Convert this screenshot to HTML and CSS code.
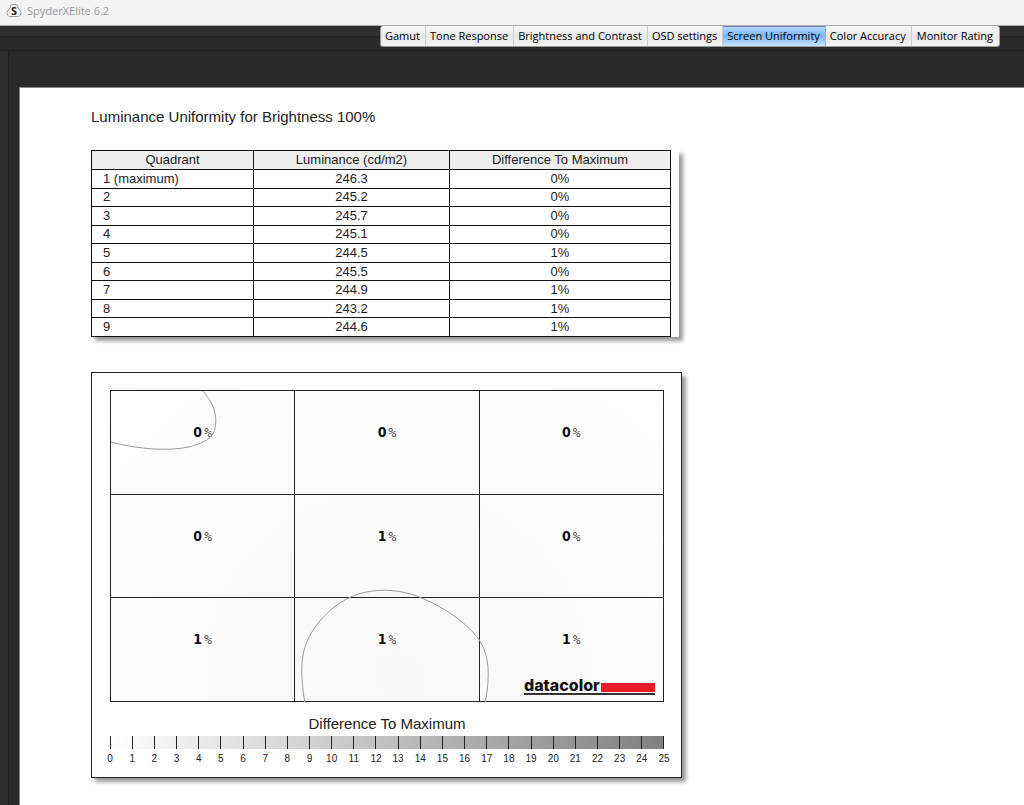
FILE: index.html
```html
<!DOCTYPE html>
<html lang="en">
<head>
  <meta charset="UTF-8">
  <meta name="viewport" content="width=device-width, initial-scale=1.0">
  <title>SpyderXElite 6.2</title>
  <link rel="stylesheet" href="styles.css">
</head>
<body>
  <header class="titlebar">
    <svg class="app-icon" width="16" height="16" viewBox="0 0 16 16" aria-hidden="true">
      <path d="M6 1.500h4q1 0 1.500 1.500l.5 2 2.500 3q1 1.200.4 2.500l-.9 2q-.5 1-1.500 1h-9q-1 0-1.500-1l-.9-2q-.6-1.300.4-2.500L4 5 4.500 3q.5-1.500 1.500-1.500z" fill="#fafafa" stroke="#999"/>
      <text x="8" y="12" text-anchor="middle">S</text>
    </svg>
    <span>SpyderXElite 6.2</span>
  </header>

  <div class="toolbar">
    <nav class="tabs">
      <button>Gamut</button>
      <button>Tone Response</button>
      <button>Brightness and Contrast</button>
      <button>OSD settings</button>
      <button class="active">Screen Uniformity</button>
      <button>Color Accuracy</button>
      <button>Monitor Rating</button>
    </nav>
  </div>

  <div class="workspace">
    <main class="report">
      <h1>Luminance Uniformity for Brightness 100%</h1>

      <div class="table-card">
        <table>
          <thead>
            <tr><th class="col-quadrant">Quadrant</th><th class="col-luminance">Luminance (cd/m2)</th><th>Difference To Maximum</th></tr>
          </thead>
          <tbody>
            <tr><td>1 (maximum)</td><td>246.3</td><td>0%</td></tr>
            <tr><td>2</td><td>245.2</td><td>0%</td></tr>
            <tr><td>3</td><td>245.7</td><td>0%</td></tr>
            <tr><td>4</td><td>245.1</td><td>0%</td></tr>
            <tr><td>5</td><td>244.5</td><td>1%</td></tr>
            <tr><td>6</td><td>245.5</td><td>0%</td></tr>
            <tr><td>7</td><td>244.9</td><td>1%</td></tr>
            <tr><td>8</td><td>243.2</td><td>1%</td></tr>
            <tr><td>9</td><td>244.6</td><td>1%</td></tr>
          </tbody>
        </table>
      </div>

      <section class="map-card">
        <div class="map">
          <div class="quadrant"><b>0</b>%</div>
          <div class="quadrant"><b>0</b>%</div>
          <div class="quadrant"><b>0</b>%</div>
          <div class="quadrant"><b>0</b>%</div>
          <div class="quadrant"><b>1</b>%</div>
          <div class="quadrant"><b>0</b>%</div>
          <div class="quadrant"><b>1</b>%</div>
          <div class="quadrant"><b>1</b>%</div>
          <div class="quadrant"><b>1</b>%</div>
          <svg class="contours" viewBox="0 0 554 311" preserveAspectRatio="none" aria-hidden="true">
            <path d="M92 0C101 10 105 20 105 30C105 42 100 48 90 52C70 61 35 60 0 51"/>
            <path d="M194 311C190 285 190 268 195 254C203 232 225 210 248 203C265 198 283 198 300 203C323 210 354 228 369 249C379 264 380 285 375 311"/>
          </svg>
          <div class="brand"><span class="brand-name">datacolor</span><span class="brand-bar"></span></div>
        </div>

        <h2>Difference To Maximum</h2>
        <ol class="scale">
          <li>0</li><li>1</li><li>2</li><li>3</li><li>4</li><li>5</li><li>6</li>
          <li>7</li><li>8</li><li>9</li><li>10</li><li>11</li><li>12</li><li>13</li>
          <li>14</li><li>15</li><li>16</li><li>17</li><li>18</li><li>19</li><li>20</li>
          <li>21</li><li>22</li><li>23</li><li>24</li><li>25</li>
        </ol>
      </section>
    </main>
  </div>
</body>
</html>
```
FILE: styles.css
```css
* {
  box-sizing: border-box;
}

body {
  margin: 0;
  min-height: 100vh;
  display: flex;
  flex-direction: column;
  background: #292929;
  color: #222;
  font-family: "Liberation Sans", Arial, sans-serif;
}

.titlebar {
  display: flex;
  align-items: center;
  gap: 5px;
  height: 26px;
  padding: 0 6px 4px;
  background: #f3f3f3;
  border-bottom: 1px solid #aaa;
  color: #999;
  font: 11px "Open Sans", "Noto Sans", sans-serif;
}

.app-icon text {
  font: bold 11px "Open Sans", sans-serif;
  fill: #222;
}

.toolbar {
  display: flex;
  justify-content: flex-end;
  height: 25px;
  padding-right: 24px;
  background: linear-gradient(#2f2f2f 10px, #242424 10px, #292929 13px);
  border-bottom: 1px solid #202020;
}

.tabs {
  display: flex;
  height: 21px;
  border: 1px solid #999;
  border-top: 0;
  border-radius: 3px;
  overflow: hidden;
  background: linear-gradient(#f8f8f8, #e8e8e8 50%, #f4f4f4);
}

.tabs button {
  padding: 0 5px 2px 4px;
  border: 0;
  border-right: 1px solid #ccc;
  background: none;
  color: #000;
  font: 11px "Open Sans", "Noto Sans", sans-serif;
  white-space: nowrap;
}

.tabs button:last-child {
  padding: 0 6px 2px 5px;
  border-right: 0;
}

.tabs .active {
  background: linear-gradient(#b8dbff, #78b5fa 50%, #c8e6ff);
  box-shadow: inset 0 1px #6f86c4;
  border-color: #78b5fa;
}

.workspace {
  flex: 1;
  display: flex;
  padding: 36px 0 0 11px;
  border-left: 8px solid #2f2f2f;
  box-shadow: inset 1px 0 #202020;
}

.report {
  flex: 1;
  padding: 19px 71px 26px;
  background: #fff;
  border: 1px solid #888;
  border-width: 1px 0 0 1px;
}

h1,
h2 {
  margin: 0;
  font-size: 15px;
  line-height: 20px;
  font-weight: normal;
}

.table-card {
  width: 588px;
  margin: 23px 0 35px;
  background: #fff;
  box-shadow: 4px 4px 4px #999;
}

table {
  width: 580px;
  height: 187px;
  border-collapse: collapse;
  table-layout: fixed;
  font-size: 13px;
  line-height: 16px;
}

th,
td {
  padding: 0;
  border: 1px solid #111;
  font-weight: normal;
  text-align: center;
}

th {
  height: 19px;
  background: #eee;
}

td:first-child {
  padding-left: 11px;
  text-align: left;
}

.col-quadrant {
  width: 162px;
}

.col-luminance {
  width: 196px;
}

.map-card {
  width: 591px;
  padding: 17px 17px 12px 18px;
  border: 1px solid #222;
  box-shadow: 4px 4px 4px #999;
}

.map {
  position: relative;
  display: grid;
  grid-template-columns: repeat(3, 1fr);
  grid-template-rows: repeat(3, 1fr);
  height: 312px;
  border: 1px solid #222;
  border-width: 1px 0 0 1px;
  background: radial-gradient(circle at 52% 92%, #f8f8f8, #fcfcfc 60%, #fff);
}

.quadrant {
  padding-top: 31px;
  border: 1px solid #222;
  border-width: 0 1px 1px 0;
  color: #555;
  font: 13px/20px "DejaVu Sans Mono", monospace;
  text-align: center;
}

.quadrant b {
  margin-right: 2px;
  font-family: "DejaVu Sans Condensed", "DejaVu Sans", sans-serif;
  font-size: 14px;
  color: #111;
}

.contours {
  position: absolute;
  inset: 0;
  width: 100%;
  height: 100%;
  fill: none;
  stroke: #999;
}

.brand {
  position: absolute;
  right: 9px;
  bottom: 7px;
  display: flex;
  align-items: center;
  width: 131px;
  height: 18px;
  border-bottom: 2px solid #333;
}

.brand-name {
  color: #111;
  font: 800 16px/16px Inter, sans-serif;
}

.brand-bar {
  flex: 1;
  height: 9px;
  margin: 4px 0 0 1px;
  background: #e91c27;
}

h2 {
  margin: 12px 0 2px;
  text-align: center;
}

.scale {
  display: flex;
  margin: 0 -11px;
  padding: 0;
  list-style: none;
  background: linear-gradient(to right, #fff, #808080) center top / calc(100% - 22px) 13px no-repeat;
  font-size: 10px;
  line-height: 12px;
  text-align: center;
}

.scale li {
  flex: 1 1 0;
}

.scale li::before {
  content: "";
  display: block;
  width: 1px;
  height: 13px;
  margin: 0 auto 4px;
  background: #222;
}
```
